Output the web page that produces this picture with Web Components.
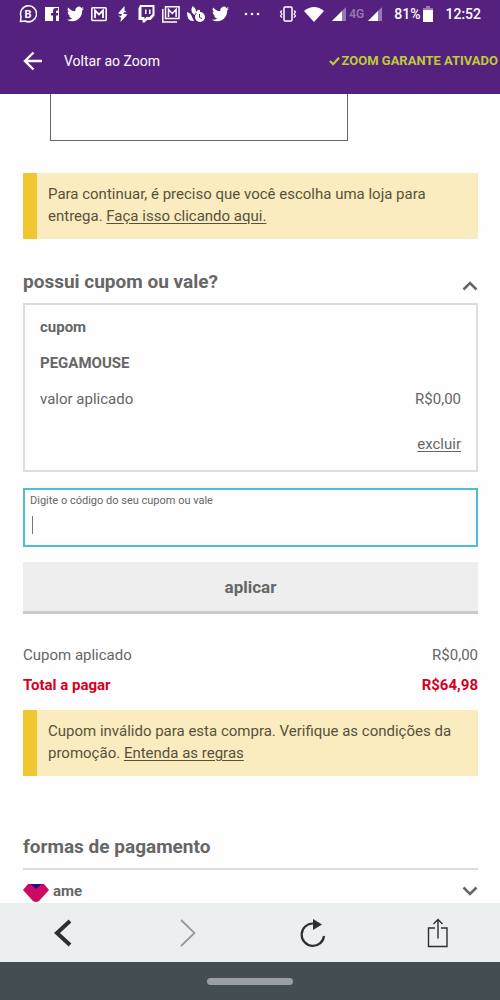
<!DOCTYPE html>
<html lang="pt-BR">
<head>
<meta charset="utf-8">
<meta name="viewport" content="width=device-width, initial-scale=1">
<title>Voltar ao Zoom</title>
<style>
  html, body { margin: 0; height: 100%; }
  body { font-family: Roboto, "Liberation Sans", sans-serif; font-size: 15px; line-height: 22px; color: #666; background: #fefefe; }
</style>
</head>
<body>
<checkout-app></checkout-app>
<script>
function define(name, html, setup) {
  const template = document.createElement('template');
  template.innerHTML = html;
  customElements.define(name, class extends HTMLElement {
    constructor() {
      super();
      this.attachShadow({ mode: 'open' }).append(template.content.cloneNode(true));
    }
    connectedCallback() { if (setup) setup(this, this.shadowRoot); }
  });
}

const bird = '<svg width="17" height="18" viewBox="0 0 24 24" preserveAspectRatio="none"><path d="M23.9 4.6a10 10 0 0 1-2.800.8 5 5 0 0 0 2.200-2.700 10 10 0 0 1-3.100 1.200 4.900 4.900 0 0 0-8.400 4.500A14 14 0 0 1 1.700 3.200a4.900 4.900 0 0 0 1.500 6.500 4.900 4.900 0 0 1-2.200-.6v.1a4.900 4.900 0 0 0 3.900 4.800 5 5 0 0 1-2.200.1 4.900 4.900 0 0 0 4.600 3.400A9.900 9.900 0 0 1 0 19.500a14 14 0 0 0 7.500 2.200c9.100 0 14-7.500 14-14v-.6a10 10 0 0 0 2.400-2.500z"/></svg>';
const signal = '<svg width="15" height="18" viewBox="0 0 15 18"><path d="M15 2v14H1z" opacity=".4"/><path d="M11 6v10H1z"/></svg>';

define('status-bar', `
  <style>
    :host { display: flex; justify-content: space-between; align-items: center; height: 28px; padding: 0 19px; color: #fff; font-size: 14px; font-weight: 500; line-height: 18px; }
    svg { fill: currentColor; display: block; flex: none; }
    div { display: flex; align-items: center; gap: 7px; }
    .more { margin-left: 8px; }
    .system { gap: 12px; }
    .cells, .power { gap: 3px; }
    .net { font-size: 12px; opacity: .4; }
  </style>
  <div>
    <svg width="18" height="18" viewBox="0 0 18 18"><path d="M1.500 16.500l.5-5A8 8 0 1 1 6 16z" fill="none" stroke="currentColor" stroke-width="1.500"/><text x="5.500" y="13" font-size="11" font-weight="700">B</text></svg>
    <svg width="16" height="18" viewBox="0 0 16 18"><path d="M1 2h14v14h-3v-5.500h2V8h-2V6.500q0-1 1-1h1V3h-2q-3 0-3 3v2H7v2.500h2V16H1z"/></svg>
    ${bird}
    <svg width="16" height="18" viewBox="0 0 16 18"><rect x=".8" y="2.800" width="14.400" height="12.700" rx="1" fill="none" stroke="currentColor" stroke-width="1.600"/><path d="M4 13V5.500l4 4 4-4V13" fill="none" stroke="currentColor" stroke-width="1.800"/></svg>
    <svg width="17" height="18" viewBox="0 0 17 18"><path d="M10.500 1 4 8.500l4 .8L7 11l-3-.5 3 2L6.500 17 13.500 9.500l-4.500-1L10.500 7l2.500.5-2.500-2z"/></svg>
    <svg width="17" height="20" viewBox="0 0 16 20"><path fill-rule="evenodd" d="M1.500 1H16v10.500L12 16H8.500L6 18.500H4V16H0V4.500zM3 3v10h3v2l2-2h3l3-3V3z"/><path d="M6.500 5.500H8v4.500H6.500zM10.500 5.500H12v4.500h-1.500z"/></svg>
    <svg width="18" height="18" viewBox="0 0 18 18"><path d="M.8 4v13H15M3.500 1.800H17v11.700H3.500zM6.500 12V4.500l3.800 4 3.800-4V12" fill="none" stroke="currentColor" stroke-width="1.500"/></svg>
    <svg width="18" height="18" viewBox="0 0 18 18"><path d="M5.500 1q6 4 2 9-5-3-2-9zM0 7q4 1 5 5l2 4Q0 17 0 7zM9 7q2-3 4-2v3H9z"/><circle cx="13" cy="12" r="5"/><path d="M12.500 9v3.500l2.500 1" fill="none" stroke="#58227d"/></svg>
    ${bird}
    <svg class="more" width="16" height="18" viewBox="0 0 16 18"><circle cx="2" cy="9" r="1.300"/><circle cx="8" cy="9" r="1.300"/><circle cx="14" cy="9" r="1.300"/></svg>
  </div>
  <div class="system">
    <div class="radio">
      <svg width="18" height="18" viewBox="0 0 18 18" style="fill:none;stroke:currentColor;stroke-width:1.500"><rect x="5" y="2" width="8" height="14" rx="1"/><path d="M3 5.500 1.500 7 3 9 1.500 11 3 12.500M15 5.500 16.500 7 15 9l1.500 2-1.500 1.500" stroke-width="1.200"/></svg>
      <svg width="20" height="18" viewBox="0 0 20 18"><path d="M0 6q10-8 20 0L10 17z"/></svg>
      <div class="cells">${signal}<span class="net">4G</span>${signal}</div>
    </div>
    <div class="power"><span>81%</span>
      <svg width="10" height="18" viewBox="0 0 10 18"><path d="M3 1h4v2h3v3H0V3h3z" opacity=".4"/><path d="M0 5h10v12H0z"/></svg>
    </div>
    <span>12:52</span>
  </div>`);

define('browser-header', `
  <style>
    :host { display: block; flex: none; background: #55217f; }
    nav { display: flex; align-items: center; height: 66px; padding: 0 2px 0 23px; }
    a { display: flex; align-items: center; gap: 22px; color: #fff; font-size: 14px; text-decoration: none; }
    p { display: flex; align-items: center; gap: 2px; margin: 0 0 0 auto; color: #bdcc35; font-size: 13px; font-weight: 700; }
    svg { fill: none; stroke: currentColor; }
  </style>
  <status-bar></status-bar>
  <nav>
    <a href="#"><svg width="19" height="20" viewBox="0 0 19 20" stroke-width="2.400"><path d="M19 10H2M10.500 1.500 2 10l8.500 8.500"/></svg>Voltar ao Zoom</a>
    <p><svg width="11" height="12" viewBox="0 0 12 12" stroke-width="2.500"><path d="M1 6l3.500 3.500L11 2.500"/></svg>ZOOM GARANTE ATIVADO</p>
  </nav>`);

define('notice-box', `
  <style>
    :host { display: block; padding: 10px 11px 12px; border-left: 14px solid #f1c731; background: #faecbe; color: #59513b; }
    p { margin: 0; }
    ::slotted(a) { color: inherit; text-underline-offset: 2px; }
  </style>
  <p><slot></slot></p>`);

define('section-title', `
  <style>
    :host { display: flex; justify-content: space-between; align-items: center; margin-bottom: 9px; line-height: 24px; }
    h2 { margin: 0; font-size: 19px; font-weight: 700; line-height: 24px; }
  </style>
  <h2><slot></slot></h2><slot name="action"></slot>`);

define('toggle-chevron', `
  <style>
    :host { display: flex; }
    button { display: flex; padding: 0; border: 0; background: none; color: #666; }
    :host([open]) svg { transform: rotate(180deg); }
    :host([open]) button { padding-top: 8px; }
  </style>
  <button type="button"><svg width="16" height="10" viewBox="0 0 16 10" fill="none" stroke="currentColor" stroke-width="2.500"><path d="M1.500 1.500 8 8l6.500-6.500"/></svg></button>`,
  (host, root) => root.querySelector('button').setAttribute('aria-label', host.getAttribute('label')));

define('value-row', `
  <style>
    :host { display: flex; justify-content: space-between; }
    :host([total]) { color: #d6001f; font-weight: 700; }
  </style>
  <span><slot></slot></span><span><slot name="value"></slot></span>`);

define('coupon-card', `
  <style>
    :host { display: block; padding: 11px 15px 15px; border: 2px solid #ddd; }
    h3, p { margin: 0 0 14px; font-size: 15px; font-weight: 700; }
    div { margin-top: 23px; text-align: right; }
    a { color: inherit; text-underline-offset: 2px; }
  </style>
  <h3>cupom</h3>
  <p>PEGAMOUSE</p>
  <value-row>valor aplicado<span slot="value">R$0,00</span></value-row>
  <div><a href="#">excluir</a></div>`);

define('coupon-form', `
  <style>
    :host { display: block; }
    form { display: grid; gap: 15px; margin: 0; }
    .field { padding: 2px 5px 7px; border: 2px solid #4dbcd9; }
    label { display: block; font-size: 11px; line-height: 18px; }
    input { display: block; box-sizing: border-box; width: 100%; height: 28px; padding: 0 4px; border: 0; outline: 0; color: inherit; font: inherit; caret-color: transparent; background: linear-gradient(#777, #777) 2px 6px / 1px 18px no-repeat; }
    button { height: 52px; padding: 0; border: 0; border-bottom: 3px solid #c9c9c9; background: #eee; color: #666; font: 700 17px/24px Roboto, sans-serif; }
  </style>
  <form>
    <div class="field"><label for="code">Digite o código do seu cupom ou vale</label><input id="code" type="text"></div>
    <button type="button">aplicar</button>
  </form>`);

define('payment-option', `
  <style>
    :host { display: flex; align-items: center; gap: 4px; padding-top: 10px; border-top: 2px solid #ddd; font-weight: 700; }
    .logo { padding-top: 4px; }
    toggle-chevron { margin-left: auto; }
  </style>
  <svg class="logo" width="26" height="18" viewBox="0 0 26 18"><path d="M5 0h16l5 6-10 11q-3 2-6 0L0 6z" fill="#cd0a62"/><path d="M7.500 0h11L13 5z" fill="#280b84"/></svg>
  <span>ame</span>
  <toggle-chevron label="Abrir ame"></toggle-chevron>`);

define('browser-toolbar', `
  <style>
    :host { display: block; flex: none; }
    nav { display: grid; grid-template-columns: repeat(4, 1fr); height: 59px; background: #ebeff0; }
    button { display: flex; align-items: center; justify-content: center; padding: 0; border: 0; background: none; color: #2b3033; }
    svg { fill: none; stroke: currentColor; }
    .next { color: #979b9c; }
    .home { display: flex; align-items: center; justify-content: center; height: 38px; background: #444d52; }
    .home span { width: 86px; height: 7px; border-radius: 4px; background: #9b9fa1; }
  </style>
  <nav>
    <button aria-label="Voltar"><svg width="18" height="28" viewBox="0 0 18 28" stroke-width="4"><path d="M16 2 3 14l13 12"/></svg></button>
    <button class="next" aria-label="Avançar"><svg width="18" height="28" viewBox="0 0 18 28" stroke-width="1.800"><path d="M2 1 15.500 14 2 27"/></svg></button>
    <button aria-label="Recarregar"><svg width="26" height="30" viewBox="0 0 26 30" stroke-width="2.200"><path d="M13 5.500A11.200 11.200 0 1 0 24 18"/><path d="M13 1v11l9-5.500z" fill="currentColor" stroke="none"/></svg></button>
    <button aria-label="Compartilhar"><svg width="22" height="30" viewBox="0 0 22 30" stroke-width="1.400"><path d="M8 10H1.500v18.500h18.500V10H14M11 20.500V2M6.500 6 11 1.500 15.500 6"/></svg></button>
  </nav>
  <div class="home"><span></span></div>`);

define('checkout-app', `
  <style>
    :host { display: flex; flex-direction: column; height: 100%; }
    main { flex: 1; min-height: 0; overflow: auto; padding: 0 22px 0 23px; }
    .frame { box-sizing: border-box; width: 298px; max-width: 100%; height: 47px; margin: 0 0 32px 27px; border: solid #666; border-width: 0 1px 1px; }
    section { margin-top: 31px; }
    coupon-form { margin: 16px 0 30px; }
    value-row { margin-bottom: 8px; }
    value-row[total] { margin-bottom: 14px; }
    .payment { margin-top: 59px; }
  </style>
  <browser-header></browser-header>
  <main>
    <div class="frame"></div>
    <notice-box>Para continuar, é preciso que você escolha uma loja para entrega. <a href="#">Faça isso clicando aqui.</a></notice-box>
    <section>
      <section-title>possui cupom ou vale?<toggle-chevron slot="action" open label="Recolher cupom"></toggle-chevron></section-title>
      <coupon-card></coupon-card>
      <coupon-form></coupon-form>
      <value-row>Cupom aplicado<span slot="value">R$0,00</span></value-row>
      <value-row total>Total a pagar<span slot="value">R$64,98</span></value-row>
      <notice-box>Cupom inválido para esta compra. Verifique as condições da promoção. <a href="#">Entenda as regras</a></notice-box>
    </section>
    <section class="payment">
      <section-title>formas de pagamento</section-title>
      <payment-option></payment-option>
    </section>
  </main>
  <browser-toolbar></browser-toolbar>`);
</script>
</body>
</html>
